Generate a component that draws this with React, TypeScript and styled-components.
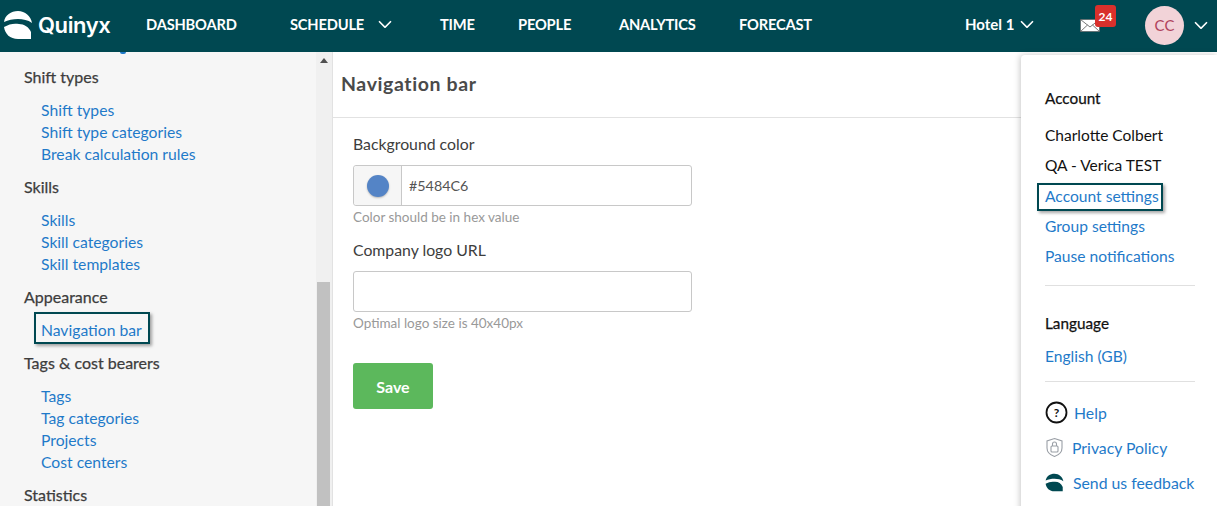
import React from "react";
import styled, { createGlobalStyle } from "styled-components";

const Global = createGlobalStyle`
  html, body {
    margin: 0;
    height: 100%;
    overflow: hidden;
    background: #fff;
    font-family: "Lato", "Liberation Sans", sans-serif;
    font-size: 16px;
    color: #3d3d3d;
  }
  * { box-sizing: border-box; }
`;

const Page = styled.div`
  position: relative;
  width: 1217px;
  height: 506px;
  overflow: hidden;
  display: flex;
  flex-direction: column;
`;

const Header = styled.header`
  height: 52px;
  flex: none;
  background: #004851;
  color: #fff;
  display: flex;
  align-items: center;
  padding: 0 0 2px 3px;
`;

const Brand = styled.div`
  display: flex;
  align-items: center;
  width: 143px;
  gap: 5px;
  font-family: "Inter", sans-serif;
  font-size: 22px;
  font-weight: 600;
  letter-spacing: -0.4px;
`;

const NavItem = styled.div<{ $w: number }>`
  width: ${(p) => p.$w}px;
  display: flex;
  align-items: center;
  gap: 14px;
  padding-bottom: 2px;
  font-size: 14.7px;
  font-weight: 700;
  letter-spacing: -0.2px;
  white-space: nowrap;
`;

const HeaderRight = styled.div`
  margin-left: auto;
  display: flex;
  align-items: center;
`;

const Hotel = styled.div`
  display: flex;
  align-items: center;
  gap: 6px;
  width: 115px;
  padding-bottom: 2px;
  font-weight: 700;
  font-size: 15px;
`;

const Mail = styled.div`
  position: relative;
  width: 65px;
  height: 20px;
  display: flex;
  align-items: center;
`;

const Badge = styled.span`
  position: absolute;
  left: 15px;
  top: -10px;
  width: 21px;
  height: 22px;
  border-radius: 3px;
  background: #d9302c;
  color: #fff;
  font-size: 12px;
  font-weight: 700;
  display: flex;
  align-items: center;
  justify-content: center;
`;

const Avatar = styled.div`
  width: 39px;
  height: 39px;
  border-radius: 50%;
  background: #f2d3d8;
  color: #b0435c;
  font-size: 15px;
  display: flex;
  align-items: center;
  justify-content: center;
  margin-right: 10px;
`;

const RightEdge = styled.span`
  width: 9px;
`;

const Body = styled.div`
  flex: 1;
  display: flex;
  min-height: 0;
`;

const Sidebar = styled.aside`
  width: 316px;
  flex: none;
  background: #f6f6f6;
  overflow: hidden;
  padding: 0 0 0 24px;
`;

const ClippedTail = styled.div`
  width: 6px;
  height: 2px;
  margin: 0 0 -2px 96px;
  border-radius: 0 0 3px 3px;
  background: #1f7ac9;
`;

const GroupTitle = styled.div<{ $after: number; $before: number }>`
  font-size: 16px;
  font-weight: 400;
  -webkit-text-stroke: 0.25px #3d3d3d;
  line-height: 22px;
  margin-top: ${(p) => p.$before}px;
  margin-bottom: ${(p) => p.$after}px;
`;

const SideLink = styled.div`
  position: relative;
  margin-left: 17px;
  font-size: 15.7px;
  line-height: 22px;
  color: #1f7ac9;
`;

const Focused = styled.span`
  position: absolute;
  left: -7px;
  top: -7px;
  width: 116px;
  height: 32px;
  border: 2px solid #004851;
  box-shadow: 2px 2px 3px rgba(0, 0, 0, 0.35);
`;

const Scrollbar = styled.div`
  width: 17px;
  flex: none;
  background: #f0f0f0;
  border-right: 1px solid #e2e2e2;
  display: flex;
  flex-direction: column;
  justify-content: space-between;
  align-items: center;
  padding-top: 6px;
`;

const ScrollArrow = styled.span`
  width: 0;
  height: 0;
  border-left: 4px solid transparent;
  border-right: 4px solid transparent;
  border-bottom: 5px solid #505050;
`;

const ScrollThumb = styled.div`
  width: 13px;
  margin-right: 1px;
  height: 224px;
  background: #c1c1c1;
`;

const Main = styled.main`
  flex: 1;
  min-width: 0;
`;

const TitleBar = styled.div`
  height: 66px;
  border-bottom: 1px solid #e2e2e2;
  padding: 20px 0 0 8px;
  font-size: 19.5px;
  font-weight: 700;
  letter-spacing: 0.6px;
  color: #4a4a4a;
`;

const Form = styled.div`
  padding: 14px 0 0 20px;
  width: 360px;
`;

const Label = styled.div`
  font-size: 15.8px;
  line-height: 24px;
  margin-bottom: 9px;
`;

const InputRow = styled.div`
  width: 339px;
  height: 41px;
  border: 1px solid #c8c8c8;
  border-radius: 3px;
  background: #fff;
  display: flex;
  align-items: center;
  font-size: 14.3px;
  color: #555;
`;

const Swatch = styled.div`
  width: 48px;
  height: 100%;
  background: #f6f6f6;
  border-right: 1px solid #c8c8c8;
  border-radius: 3px 0 0 3px;
  display: flex;
  align-items: center;
  justify-content: center;
  margin-right: 7px;
`;

const Dot = styled.span`
  width: 22px;
  height: 22px;
  border-radius: 50%;
  background: #5484c6;
  box-shadow: 0 1px 2px rgba(0, 0, 0, 0.25);
`;

const Hint = styled.div`
  font-size: 13.5px;
  line-height: 22px;
  color: #999;
  margin-bottom: 10px;
`;

const Save = styled.button`
  margin-top: 19px;
  width: 80px;
  height: 46px;
  border: 0;
  border-radius: 3px;
  background: #5cb85c;
  color: #fff;
  font-family: inherit;
  font-size: 16px;
  font-weight: 700;
`;

const Popup = styled.div`
  position: absolute;
  left: 1021px;
  top: 55px;
  width: 196px;
  height: 460px;
  background: #fff;
  border-radius: 4px 0 0 0;
  box-shadow: -1px 0 6px rgba(0, 0, 0, 0.22);
  padding: 30px 22px 0 24px;
`;

const PopTitle = styled.div<{ $after: number }>`
  font-size: 15.3px;
  font-weight: 400;
  -webkit-text-stroke: 0.25px #111;
  color: #111;
  line-height: 26px;
  margin-bottom: ${(p) => p.$after}px;
`;

const PopText = styled.div`
  font-size: 15.5px;
  line-height: 30.25px;
  color: #111;
`;

const PopLink = styled.div`
  position: relative;
  font-size: 15.6px;
  line-height: 30.25px;
  color: #1f7ac9;
  white-space: nowrap;
`;

const PopFocus = styled.span`
  position: absolute;
  left: -8px;
  top: 2px;
  width: 126px;
  height: 28px;
  border: 2px solid #004851;
  box-shadow: 2px 2px 3px rgba(0, 0, 0, 0.35);
`;

const Rule = styled.hr<{ $top: number; $bottom: number }>`
  border: 0;
  border-top: 1px solid #e0e0e0;
  margin: ${(p) => p.$top}px 0 ${(p) => p.$bottom}px;
`;

const IconLink = styled.div<{ $gap: number }>`
  display: flex;
  align-items: center;
  gap: ${(p) => p.$gap}px;
  height: 35px;
  font-size: 15.8px;
  color: #1f7ac9;
  white-space: nowrap;
`;

const Chevron = ({ size = 14 }: { size?: number }) => (
  <svg width={size} height={size * 0.64} viewBox="0 0 14 9" fill="none" stroke="#fff" strokeWidth="1.6">
    <path d="M1 1.2 7 7.4 13 1.2" />
  </svg>
);

const QuinyxMark = ({ color, size }: { color: string; size: number }) => (
  <svg width={size} height={size} viewBox="0 0 30 30">
    <path fill={color} d="M1 12C2 5 8 1 15 1c7 0 13 5 14 12-4-3-9-4-14-4C10 9 5 10 1 12Z" />
    <path fill={color} d="M1 17c5-3 10-4 15-3 5 0 10 3 12 8 0 3 0 6 0 7H15C7 29 2 24 1 17Z" />
  </svg>
);

const groups = [
  { title: "Shift types", before: 14, after: 11, links: ["Shift types", "Shift type categories", "Break calculation rules"] },
  { title: "Skills", before: 11, after: 11, links: ["Skills", "Skill categories", "Skill templates"] },
  { title: "Appearance", before: 11, after: 11, links: ["Navigation bar"] },
  { title: "Tags & cost bearers", before: 11, after: 11, links: ["Tags", "Tag categories", "Projects", "Cost centers"] },
  { title: "Statistics", before: 11, after: 11, links: [] as string[] },
];

export default function App() {
  return (
    <Page>
      <Global />
      <Header>
        <Brand>
          <QuinyxMark color="#fff" size={30} />
          Quinyx
        </Brand>
        <NavItem $w={144}>DASHBOARD</NavItem>
        <NavItem $w={150}>
          SCHEDULE <Chevron />
        </NavItem>
        <NavItem $w={78}>TIME</NavItem>
        <NavItem $w={101}>PEOPLE</NavItem>
        <NavItem $w={120}>ANALYTICS</NavItem>
        <NavItem $w={100}>FORECAST</NavItem>
        <HeaderRight>
          <Hotel>
            Hotel 1 <Chevron />
          </Hotel>
          <Mail>
            <svg width="20" height="13" viewBox="0 0 20 13">
              <rect x="0.5" y="0.5" width="19" height="12" fill="#fff" stroke="#555" strokeWidth="0.6" />
              <path d="M0.5 0.5 10 8l9.5-7.5M0.5 12.5 7.5 6M19.5 12.5 12.5 6" fill="none" stroke="#555" strokeWidth="0.8" />
            </svg>
            <Badge>24</Badge>
          </Mail>
          <Avatar>CC</Avatar>
          <Chevron />
          <RightEdge />
        </HeaderRight>
      </Header>
      <Body>
        <Sidebar>
          <ClippedTail />
          {groups.map((g) => (
            <div key={g.title}>
              <GroupTitle $before={g.before} $after={g.after}>
                {g.title}
              </GroupTitle>
              {g.links.map((l) => (
                <SideLink key={l}>
                  {l}
                  {l === "Navigation bar" && <Focused />}
                </SideLink>
              ))}
            </div>
          ))}
        </Sidebar>
        <Scrollbar>
          <ScrollArrow />
          <ScrollThumb />
        </Scrollbar>
        <Main>
          <TitleBar>Navigation bar</TitleBar>
          <Form>
            <Label>Background color</Label>
            <InputRow>
              <Swatch>
                <Dot />
              </Swatch>
              #5484C6
            </InputRow>
            <Hint>Color should be in hex value</Hint>
            <Label>Company logo URL</Label>
            <InputRow />
            <Hint>Optimal logo size is 40x40px</Hint>
            <Save>Save</Save>
          </Form>
        </Main>
      </Body>
      <Popup>
        <PopTitle $after={9}>Account</PopTitle>
        <PopText>Charlotte Colbert</PopText>
        <PopText>QA - Verica TEST</PopText>
        <PopLink>
          Account settings
          <PopFocus />
        </PopLink>
        <PopLink>Group settings</PopLink>
        <PopLink>Pause notifications</PopLink>
        <Rule $top={14} $bottom={24} />
        <PopTitle $after={5}>Language</PopTitle>
        <PopLink>English (GB)</PopLink>
        <Rule $top={9} $bottom={13} />
        <IconLink $gap={6}>
          <svg width="23" height="23" viewBox="0 0 23 23">
            <circle cx="11.5" cy="11.5" r="10" fill="#fff" stroke="#111" strokeWidth="1.8" />
            <text x="11.5" y="16" textAnchor="middle" fontSize="12" fontWeight="700" fill="#111" fontFamily="Lato, sans-serif">?</text>
          </svg>
          Help
        </IconLink>
        <IconLink $gap={8}>
          <svg width="19" height="21" viewBox="0 0 19 21" fill="none" stroke="#9a9fa6" strokeWidth="1.1">
            <path d="M9.5 1.5 17 4v7c0 4-3.2 7-7.5 8.5C5.200 18 2 15 2 11V4Z" />
            <rect x="6" y="9" width="7" height="6" rx="1" />
            <path d="M7.500 9V7a2 2 0 0 1 4 0v2" />
          </svg>
          Privacy Policy
        </IconLink>
        <IconLink $gap={9}>
          <QuinyxMark color="#004851" size={19} />
          Send us feedback
        </IconLink>
      </Popup>
    </Page>
  );
}
